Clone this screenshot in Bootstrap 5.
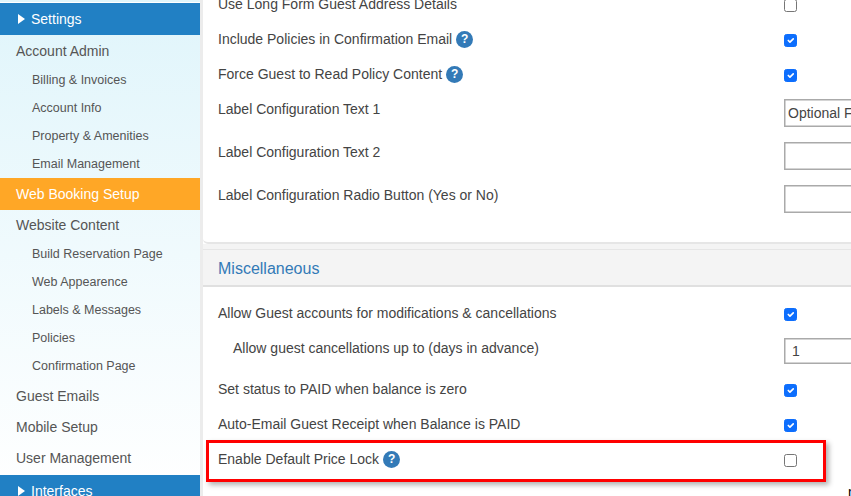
<!DOCTYPE html>
<html lang="en">
<head>
    <meta charset="UTF-8">
    <title>Web Booking Setup</title>
    <link href="https://cdn.jsdelivr.net/npm/bootstrap@5.3.0/dist/css/bootstrap.min.css" rel="stylesheet">
    <style>
        html, body { height: 496px; overflow: hidden; }
        body { font-family: "Liberation Sans", Arial, sans-serif; font-size: 14px; color: #444; background: #fff; }
        #page { height: 496px; position: relative; overflow: hidden; }
        #side { width: 200px; flex: none; height: 496px; background: linear-gradient(#e0f5fb, #ffffff); color: #555; }
        .side-cap { height: 3px; border-bottom: 1px solid #fff; }
        .side-head { height: 32px; background: #2180c4; color: #fff; padding-left: 18px; display: flex; align-items: center; gap: 6px; }
        .side-head i { width: 0; height: 0; border-left: 7px solid #fff; border-top: 5px solid transparent; border-bottom: 5px solid transparent; }
        .side-top { height: 31px; padding: 1px 0 0 16px; display: flex; align-items: center; }
        .side-top.active { height: 32px; background: #ffa726; color: #fff; }
        .side-top.thin { height: 30px; }
        .side-top.last { height: 33px; padding-top: 0; }
        .side-sub { height: 28px; padding-left: 32px; display: flex; align-items: center; font-size: 12.5px; }
        #main { flex: 1; min-width: 0; background: #fff; border-left: 3px solid #ececec; }
        .block-one { margin-top: -13px; height: 257px; border-bottom: 2px solid #e6e6e6; border-radius: 0 0 0 5px; padding-left: 15px; }
        .gap-strip { height: 5px; background: #f4f4f4; }
        .block-head { height: 38px; background: #f4f4f4; border-top: 1px solid #e6e6e6; border-bottom: 2px solid #e0e0e0; color: #337ab7; font-size: 16px; padding: 2px 0 0 15px; display: flex; align-items: center; }
        .block-two { padding: 9px 0 0 15px; }
        .opt-row { height: 35px; display: flex; align-items: center; }
        .opt-row.tall { height: 43px; align-items: flex-start; padding-top: 7px; }
        .opt-row.short { height: 41px; }
        .opt-label { width: 566px; flex: none; display: flex; align-items: center; gap: 4px; }
        .opt-label.indent { padding-left: 15px; }
        .help-dot { width: 17px; height: 17px; border-radius: 50%; background: #337ab7; color: #fff; font-size: 12px; font-weight: bold; line-height: 17px; text-align: center; flex: none; }
        .form-check-input.box { width: 13px; height: 13px; margin: 2px 0 0; border: 1px solid #767676; border-radius: 2.5px; }
        .form-check-input.box:checked { background-color: #0d6efd; border-color: #0d6efd; }
        .text-box { width: 120px; height: 28px; border: 1px solid #aaa; border-radius: 0; padding: 0 3px; font-size: 14px; color: #444; outline: 0; flex: none; box-shadow: inset 0 0 0 .5px #aaa; font-family: inherit; }
        .text-box.low { height: 26px; padding-left: 7px; }
        .stray-char { margin: 5px 0 0 630px; color: #000; line-height: 21px; }
        #lock-box { position: absolute; left: 206px; top: 440px; width: 620px; height: 42px; border: 3px solid #f00; box-shadow: 3px 3px 5px rgba(0, 0, 0, .3); pointer-events: none; }
    </style>
</head>
<body>
    <div id="page" class="d-flex">
        <div id="side">
            <div class="side-cap"></div>
            <div class="side-head"><i></i>Settings</div>
            <div class="side-top">Account Admin</div>
            <div class="side-sub">Billing &amp; Invoices</div>
            <div class="side-sub">Account Info</div>
            <div class="side-sub">Property &amp; Amenities</div>
            <div class="side-sub">Email Management</div>
            <div class="side-top active">Web Booking Setup</div>
            <div class="side-top thin">Website Content</div>
            <div class="side-sub">Build Reservation Page</div>
            <div class="side-sub">Web Appearence</div>
            <div class="side-sub">Labels &amp; Messages</div>
            <div class="side-sub">Policies</div>
            <div class="side-sub">Confirmation Page</div>
            <div class="side-top">Guest Emails</div>
            <div class="side-top">Mobile Setup</div>
            <div class="side-top last">User Management</div>
            <div class="side-head"><i></i>Interfaces</div>
        </div>
        <div id="main">
            <div class="block-one">
                <div class="opt-row"><div class="opt-label">Use Long Form Guest Address Details</div><input class="form-check-input box" type="checkbox"></div>
                <div class="opt-row"><div class="opt-label">Include Policies in Confirmation Email <span class="help-dot">?</span></div><input class="form-check-input box" type="checkbox" checked></div>
                <div class="opt-row"><div class="opt-label">Force Guest to Read Policy Content <span class="help-dot">?</span></div><input class="form-check-input box" type="checkbox" checked></div>
                <div class="opt-row tall"><div class="opt-label">Label Configuration Text 1</div><input class="text-box" type="text" value="Optional Field"></div>
                <div class="opt-row tall"><div class="opt-label">Label Configuration Text 2</div><input class="text-box" type="text"></div>
                <div class="opt-row tall"><div class="opt-label">Label Configuration Radio Button (Yes or No)</div><input class="text-box" type="text"></div>
            </div>
            <div class="gap-strip"></div>
            <div class="block-head">Miscellaneous</div>
            <div class="block-two">
                <div class="opt-row"><div class="opt-label">Allow Guest accounts for modifications &amp; cancellations</div><input class="form-check-input box" type="checkbox" checked></div>
                <div class="opt-row tall short"><div class="opt-label indent">Allow guest cancellations up to (days in advance)</div><input class="text-box low" type="text" value="1"></div>
                <div class="opt-row"><div class="opt-label">Set status to PAID when balance is zero</div><input class="form-check-input box" type="checkbox" checked></div>
                <div class="opt-row"><div class="opt-label">Auto-Email Guest Receipt when Balance is PAID</div><input class="form-check-input box" type="checkbox" checked></div>
                <div class="opt-row"><div class="opt-label">Enable Default Price Lock <span class="help-dot">?</span></div><input class="form-check-input box" type="checkbox"></div>
                <div class="stray-char">n</div>
            </div>
        </div>
        <div id="lock-box"></div>
    </div>
    <script src="https://cdn.jsdelivr.net/npm/bootstrap@5.3.0/dist/js/bootstrap.bundle.min.js"></script>
</body>
</html>
